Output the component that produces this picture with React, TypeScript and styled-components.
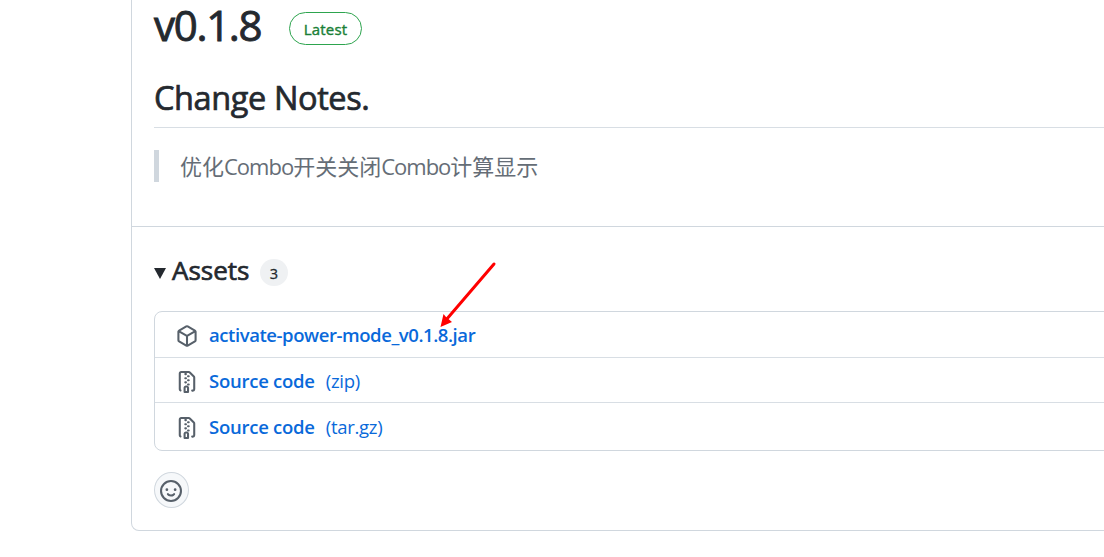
import React, { FC } from 'react';
import styled, { createGlobalStyle } from 'styled-components';

const GlobalStyle = createGlobalStyle`
    * {
        box-sizing: border-box;
    }
    body {
        margin: 0;
        overflow: hidden;
        background: #fff;
        color: #24292f;
        font-family: 'Open Sans', 'Noto Sans CJK SC', sans-serif;
    }
`;

const Page = styled.main`
    position: relative;
    height: 557px;
    overflow: hidden;
    padding-left: 131px;
`;

const Release = styled.article`
    height: 531px;
    width: 1000px;
    border: 1px solid #d0d7de;
    border-top: 0;
    border-radius: 0 0 8px 8px;
`;

const Body = styled.section`
    height: 227px;
    padding-left: 22px;
    border-bottom: 1px solid #d0d7de;
`;

const TitleRow = styled.div`
    display: flex;
    align-items: flex-start;
    height: 70px;
`;

const Title = styled.h1`
    width: 135px;
    margin: 0;
    font-size: 42px;
    font-weight: 400;
    line-height: 49px;
    letter-spacing: -1.3px;
    -webkit-text-stroke: 0.9px currentColor;
`;

const Latest = styled.span`
    width: 73px;
    height: 33px;
    margin-top: 12px;
    border: 1px solid #2da44e;
    border-radius: 17px;
    color: #1a7f37;
    font-size: 15px;
    font-weight: 400;
    line-height: 33px;
    letter-spacing: 0.2px;
    text-align: center;
    -webkit-text-stroke: 0.4px currentColor;
`;

const Heading = styled.h2`
    height: 58px;
    margin: 0;
    border-bottom: 1px solid #d8dee4;
    font-size: 32.5px;
    font-weight: 400;
    line-height: 56px;
    letter-spacing: -0.4px;
    -webkit-text-stroke: 0.7px currentColor;
`;

const Quote = styled.blockquote`
    height: 32px;
    margin: 22px 0 0;
    padding-left: 21px;
    border-left: 5px solid #d0d7de;
    color: #656d76;
    font-size: 22px;
    line-height: 33px;
`;

const Latin = styled.span`
    letter-spacing: -1px;
`;

const Assets = styled.section`
    padding: 29px 0 0 22px;
`;

const AssetsHeader = styled.div`
    display: flex;
    align-items: center;
    height: 33px;
`;

const Caret = styled.svg`
    width: 12px;
    height: 12px;
    margin: 1px 6px 0 0;
    fill: #24292f;
`;

const AssetsTitle = styled.h3`
    width: 88px;
    margin: -5px 0 0;
    font-size: 26px;
    font-weight: 400;
    line-height: 32px;
    -webkit-text-stroke: 0.7px currentColor;
`;

const Counter = styled.span`
    width: 28px;
    height: 27px;
    border-radius: 14px;
    background: #eff1f3;
    font-size: 14.5px;
    line-height: 29px;
    text-align: center;
    -webkit-text-stroke: 0.3px currentColor;
`;

const AssetList = styled.ul`
    height: 140px;
    margin: 22px 0 0;
    padding: 0;
    border: 1px solid #d0d7de;
    border-radius: 8px;
    list-style: none;
`;

const AssetRow = styled.li`
    display: flex;
    align-items: center;
    height: 45px;
    padding-left: 21px;
    & + & {
        padding-top: 1px;
        border-top: 1px solid #d8dee4;
    }
    & + & + & {
        height: 48px;
        padding-top: 0;
    }
`;

const Icon = styled.svg`
    flex: none;
    width: 22px;
    height: 22px;
    fill: #57606a;
`;

const RowIcon = styled(Icon)`
    margin-top: 2px;
`;

const AssetLink = styled.a<{ $spacing: number }>`
    margin-left: 11px;
    color: #0969da;
    font-size: 18.5px;
    font-weight: 600;
    line-height: 44px;
    letter-spacing: ${(props) => props.$spacing}px;
    white-space: nowrap;
`;

const Kind = styled.span`
    margin-left: 11px;
    color: #0969da;
    font-size: 18.5px;
    line-height: 44px;
    letter-spacing: -0.3px;
`;

const Reaction = styled.button`
    display: flex;
    align-items: center;
    justify-content: center;
    width: 35px;
    height: 36px;
    margin-top: 21px;
    padding: 1px 1px 0 0;
    border: 1px solid #d0d7de;
    border-radius: 50%;
    background: #f6f8fa;
`;

const Arrow = styled.svg`
    position: absolute;
    left: 436px;
    top: 258px;
    width: 64px;
    height: 74px;
`;

const packagePath =
    'm8.878.392 5.25 3.045c.54.314.872.89.872 1.514v6.098a1.75 1.75 0 0 1-.872 1.514l-5.25 3.045a1.75 1.75 0 0 1-1.756 0l-5.25-3.045A1.75 1.75 0 0 1 1 11.049V4.951c0-.624.332-1.201.872-1.514L7.122.392a1.75 1.75 0 0 1 1.756 0ZM7.875 1.69l-4.63 2.685L8 7.133l4.755-2.758-4.63-2.685a.248.248 0 0 0-.25 0ZM2.5 5.677v5.372c0 .09.047.171.125.216l4.625 2.683V8.432Zm6.25 8.271 4.625-2.683a.25.25 0 0 0 .125-.216V5.677L8.75 8.432Z';
const zipPath =
    'M3.5 1.75v11.5c0 .09.048.173.126.217a.75.75 0 0 1-.752 1.298A1.748 1.748 0 0 1 2 13.25V1.75C2 .784 2.784 0 3.75 0h5.586c.464 0 .909.185 1.237.513l2.914 2.914c.329.328.513.773.513 1.237v8.586A1.75 1.75 0 0 1 12.25 15h-.5a.75.75 0 0 1 0-1.5h.5a.25.25 0 0 0 .25-.25V4.664a.25.25 0 0 0-.073-.177L9.513 1.573a.25.25 0 0 0-.177-.073H7.25a.75.75 0 0 1 0 1.5h-.5a.75.75 0 0 1 0-1.5h-3a.25.25 0 0 0-.25.25Zm3.75 8.75h.5c.966 0 1.75.784 1.75 1.75v3a.75.75 0 0 1-.75.75h-2.5a.75.75 0 0 1-.75-.75v-3c0-.966.784-1.75 1.75-1.75ZM6 5.25a.75.75 0 0 1 .75-.75h.5a.75.75 0 0 1 0 1.5h-.5A.75.75 0 0 1 6 5.25Zm.75 2.25h.5a.75.75 0 0 1 0 1.5h-.5a.75.75 0 0 1 0-1.5ZM8 6.75A.75.75 0 0 1 8.75 6h.5a.75.75 0 0 1 0 1.5h-.5A.75.75 0 0 1 8 6.75ZM8.75 3h.5a.75.75 0 0 1 0 1.5h-.5a.75.75 0 0 1 0-1.5ZM8 9.75A.75.75 0 0 1 8.75 9h.5a.75.75 0 0 1 0 1.5h-.5A.75.75 0 0 1 8 9.75Zm-1 2.5v2.25h1v-2.25a.25.25 0 0 0-.25-.25h-.5a.25.25 0 0 0-.25.25Z';
const smileyPath =
    'M8 0a8 8 0 1 1 0 16A8 8 0 0 1 8 0ZM1.5 8a6.5 6.5 0 1 0 13 0 6.5 6.5 0 0 0-13 0Zm3.82 1.636a.75.75 0 0 1 1.038.175l.007.009c.103.118.22.222.35.31.264.178.683.37 1.285.37.602 0 1.02-.192 1.285-.371.13-.088.247-.192.35-.31l.007-.008a.75.75 0 0 1 1.222.87c-.06.09-.13.17-.205.245-.16.166-.338.316-.53.445-.63.418-1.37.638-2.127.629-.946 0-1.652-.308-2.126-.63a3.331 3.331 0 0 1-.715-.657.75.75 0 0 1 .163-1.072ZM12 7a1 1 0 1 1-2 0 1 1 0 0 1 2 0ZM5 8a1 1 0 1 1 0-2 1 1 0 0 1 0 2Z';

interface AssetProps {
    icon: string;
    name: string;
    kind?: string;
    spacing?: number;
}

const Asset: FC<AssetProps> = ({ icon, name, kind, spacing = -0.25 }) => (
    <AssetRow>
        <RowIcon viewBox="0 0 16 16">
            <path d={icon} />
        </RowIcon>
        <AssetLink $spacing={spacing}>{name}</AssetLink>
        {kind && <Kind>({kind})</Kind>}
    </AssetRow>
);

const App: FC = () => (
    <Page>
        <GlobalStyle />
        <Release>
            <Body>
                <TitleRow>
                    <Title>v0.1.8</Title>
                    <Latest>Latest</Latest>
                </TitleRow>
                <Heading>Change Notes.</Heading>
                <Quote>
                    优化<Latin>Combo</Latin>开关关闭<Latin>Combo</Latin>计算显示
                </Quote>
            </Body>
            <Assets>
                <AssetsHeader>
                    <Caret viewBox="0 0 12 12">
                        <path d="M0 1h12L6 12z" />
                    </Caret>
                    <AssetsTitle>Assets</AssetsTitle>
                    <Counter>3</Counter>
                </AssetsHeader>
                <AssetList>
                    <Asset
                        icon={packagePath}
                        name="activate-power-mode_v0.1.8.jar"
                        spacing={-0.43}
                    />
                    <Asset icon={zipPath} name="Source code" kind="zip" />
                    <Asset icon={zipPath} name="Source code" kind="tar.gz" />
                </AssetList>
                <Reaction aria-label="Add reaction">
                    <Icon viewBox="0 0 16 16">
                        <path d={smileyPath} />
                    </Icon>
                </Reaction>
            </Assets>
        </Release>
        <Arrow viewBox="0 0 64 74">
            <path
                d="M58 6 10 62"
                fill="none"
                stroke="#f00"
                strokeWidth="3"
                strokeLinecap="round"
            />
            <path d="M4.500 69 7.500 56l2.500 3 6 5z" fill="#f00" />
        </Arrow>
    </Page>
);

export default App;
